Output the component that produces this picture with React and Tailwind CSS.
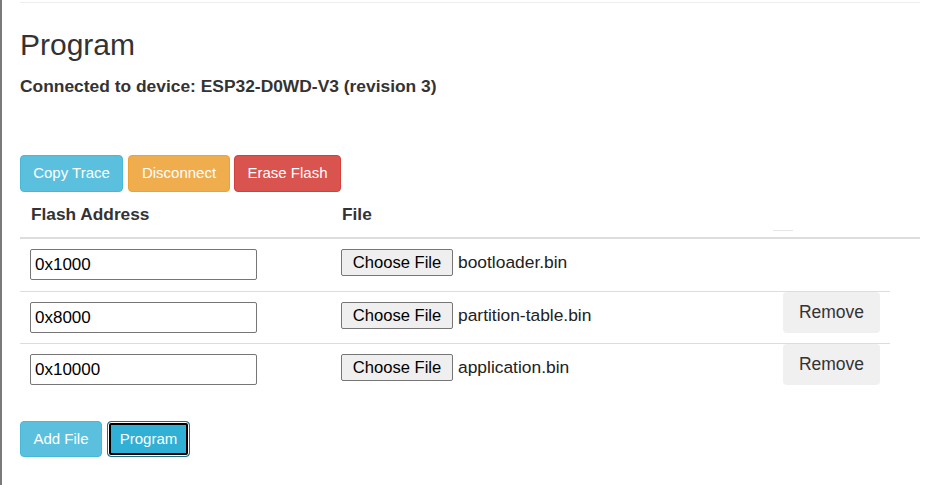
export default function App() {
  const rows = [
    { addr: "0x1000", file: "bootloader.bin", remove: false },
    { addr: "0x8000", file: "partition-table.bin", remove: true },
    { addr: "0x10000", file: "application.bin", remove: true },
  ];
  return (
    <div className="h-[485px] w-[932px] overflow-hidden border-l-2 border-[#7a7a7a] bg-white font-['Liberation_Sans',Arial,sans-serif] text-[#333]">
      <div className="ml-[18px] w-[900px] pt-[2px]">
        <div className="border-t border-[#eeeeee]" />
        <h2 className="mt-[25px] text-[30px] leading-[33px] font-normal">Program</h2>
        <p className="mt-[14px] text-[17.4px] font-bold leading-[22px]">
          Connected to device: ESP32-D0WD-V3 (revision 3)
        </p>
        <div className="mt-[58px] flex">
          <button className="h-[37px] w-[103px] rounded-[4px] border border-[#46b8da] bg-[#5bc0de] text-[15px] text-white">
            Copy Trace
          </button>
          <button className="ml-[5px] h-[37px] w-[102px] rounded-[4px] border border-[#eea236] bg-[#f0ad4e] text-[15px] text-white">
            Disconnect
          </button>
          <button className="ml-[4px] h-[37px] w-[107px] rounded-[4px] border border-[#d43f3a] bg-[#d9534f] text-[15px] text-white">
            Erase Flash
          </button>
        </div>
        <div className="flex h-[47px] border-b-2 border-[#dddddd] text-[17.3px] font-bold leading-[22px]">
          <div className="w-[311px] pl-[11px] pt-[11px]">Flash Address</div>
          <div className="w-[442px] pl-[11px] pt-[11px]">File</div>
          <div className="flex w-[20px] items-end pb-[6px]">
            <div className="h-0 w-[20px] border-b border-[#e6e6e6]" />
          </div>
        </div>
        {rows.map((r, i) => (
          <div
            key={i}
            className={`flex w-[870px] ${i === 0 ? "h-[53px]" : "h-[52px]"} ${i < 2 ? "border-b border-[#dddddd]" : ""}`}
          >
            <div className="w-[311px] pl-[10px] pt-[10px]">
              <input
                readOnly
                value={r.addr}
                className="h-[31px] w-[227px] rounded-[2px] border border-[#767676] px-[4px] text-[17px] text-black outline-none"
              />
            </div>
            <div className="flex w-[442px] items-start pl-[10px] pt-[10px]">
              <button className="h-[27px] w-[112px] rounded-[2px] border border-[#767676] bg-[#efefef] text-[16.6px] leading-[25px] text-black">
                Choose File
              </button>
              <span className="ml-[5px] text-[17.4px] leading-[27px] text-[#222]">{r.file}</span>
            </div>
            <div className="w-[117px] pl-[10px]">
              {r.remove && (
                <button className="h-[41px] w-[97px] rounded-[4px] bg-[#f0f0f0] text-[17.5px] text-[#333]">
                  Remove
                </button>
              )}
            </div>
          </div>
        ))}
        <div className="mt-[25px] flex">
          <button className="h-[36px] w-[82px] rounded-[4px] border border-[#46b8da] bg-[#5bc0de] text-[15px] text-white">
            Add File
          </button>
          <button className="ml-[5px] h-[36px] w-[83px] rounded-[4px] border border-[#1b6d85] bg-[#31b0d5] text-[15px] text-white shadow-[inset_0_0_0_1px_#ffffff,inset_0_0_0_3px_#000000]">
            Program
          </button>
        </div>
      </div>
    </div>
  );
}
